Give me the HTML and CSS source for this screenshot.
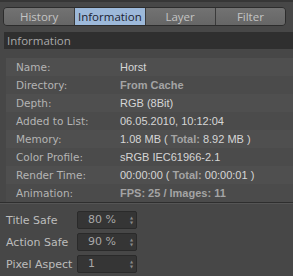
FILE: index.html
```html
<!DOCTYPE html>
<html lang="en">
<head>
  <meta charset="UTF-8">
  <title>Information</title>
  <link rel="stylesheet" href="styles.css">
</head>
<body>

  <!-- Tabs -->
  <div class="tabs">
    <div class="tab">History</div>
    <div class="tab active">Information</div>
    <div class="tab">Layer</div>
    <div class="tab">Filter</div>
  </div>

  <!-- Section header -->
  <div class="header">Information</div>

  <!-- Info rows -->
  <div class="info">
    <div class="row"><span class="label">Name:</span><span class="value">Horst</span></div>
    <div class="row"><span class="label">Directory:</span><span class="value dim">From Cache</span></div>
    <div class="row"><span class="label">Depth:</span><span class="value">RGB (8Bit)</span></div>
    <div class="row"><span class="label">Added to List:</span><span class="value">06.05.2010, 10:12:04</span></div>
    <div class="row"><span class="label">Memory:</span><span class="value">1.08 MB ( <b class="dim">Total:</b> 8.92 MB )</span></div>
    <div class="row"><span class="label">Color Profile:</span><span class="value">sRGB IEC61966-2.1</span></div>
    <div class="row"><span class="label">Render Time:</span><span class="value">00:00:00 ( <b class="dim">Total:</b> 00:00:01 )</span></div>
    <div class="row"><span class="label">Animation:</span><span class="value dim">FPS: 25 / Images: 11</span></div>
  </div>

  <!-- Settings -->
  <div class="settings">
    <div class="field">
      <label>Title Safe</label>
      <div class="select">80 %<span class="arrows">&#9650;<br>&#9660;</span></div>
    </div>
    <div class="field">
      <label>Action Safe</label>
      <div class="select">90 %<span class="arrows">&#9650;<br>&#9660;</span></div>
    </div>
    <div class="field">
      <label>Pixel Aspect</label>
      <div class="select">1<span class="arrows">&#9650;<br>&#9660;</span></div>
    </div>
  </div>

</body>
</html>
```

FILE: styles.css
```css
body {
  margin: 0;
  width: 293px;
  height: 276px;
  background-color: #474747;
  border-top: 2px solid #363636;
  box-sizing: border-box;
  font-family: "Open Sans", "DejaVu Sans", sans-serif;
  font-size: 11px;
  color: #b8b8b8;
  overflow: hidden;
}
.tabs {
  display: grid;
  grid-template-columns: repeat(4, 1fr);
  margin: 5px 7px 0 3px;
  height: 17px;
  border: 1px solid #2c2c2c;
  border-radius: 4px;
  overflow: hidden;
}
.tab {
  background: linear-gradient(#727272, #666666);
  color: #c4c4c4;
  text-align: center;
  line-height: 17px;
  font-size: 11.5px;
  border-left: 1px solid #3a3a3a;
}
.tab:first-child {
  border-left: none;
}
.tab.active {
  background: #9db9da;
  color: #1c2230;
}
.header {
  margin: 6px 0 0 4px;
  height: 17px;
  line-height: 17px;
  padding-left: 3px;
  background-color: #2f2f2f;
  color: #a9a9a9;
  font-size: 11.5px;
}
.info {
  margin: 9px 0 0 6px;
}
.row {
  display: flex;
  height: 18px;
  line-height: 18px;
  background-color: #4b4b4b;
}
.row:nth-child(odd) {
  background-color: #4f4f4f;
}
.label {
  width: 104px;
  padding-left: 10px;
  font-family: "DejaVu Sans", sans-serif;
  font-size: 10.5px;
  color: #b4b4b4;
}
.value {
  font-family: "Liberation Sans", Arial, sans-serif;
  font-size: 11px;
  color: #d6d6d6;
}
.dim {
  color: #a4a4a4;
  font-weight: bold;
}
.settings {
  border-top: 1px solid #2e2e2e;
  box-shadow: inset 0 1px 0 #555555;
  padding-top: 6px;
}
.field {
  display: flex;
  align-items: center;
  height: 22px;
}
.field label {
  width: 71px;
  padding-left: 6px;
  font-family: "DejaVu Sans", sans-serif;
  font-size: 11px;
  color: #bdbdbd;
}
.select {
  position: relative;
  width: 48px;
  height: 16px;
  line-height: 16px;
  padding-left: 10px;
  background-color: #353535;
  border: 1px solid #2a2a2a;
  border-radius: 2px;
  font-family: "DejaVu Sans", sans-serif;
  font-size: 11px;
  color: #a8a8a8;
}
.arrows {
  position: absolute;
  right: 3px;
  top: 3px;
  font-size: 4px;
  line-height: 5px;
  color: #8a8a8a;
}
```
